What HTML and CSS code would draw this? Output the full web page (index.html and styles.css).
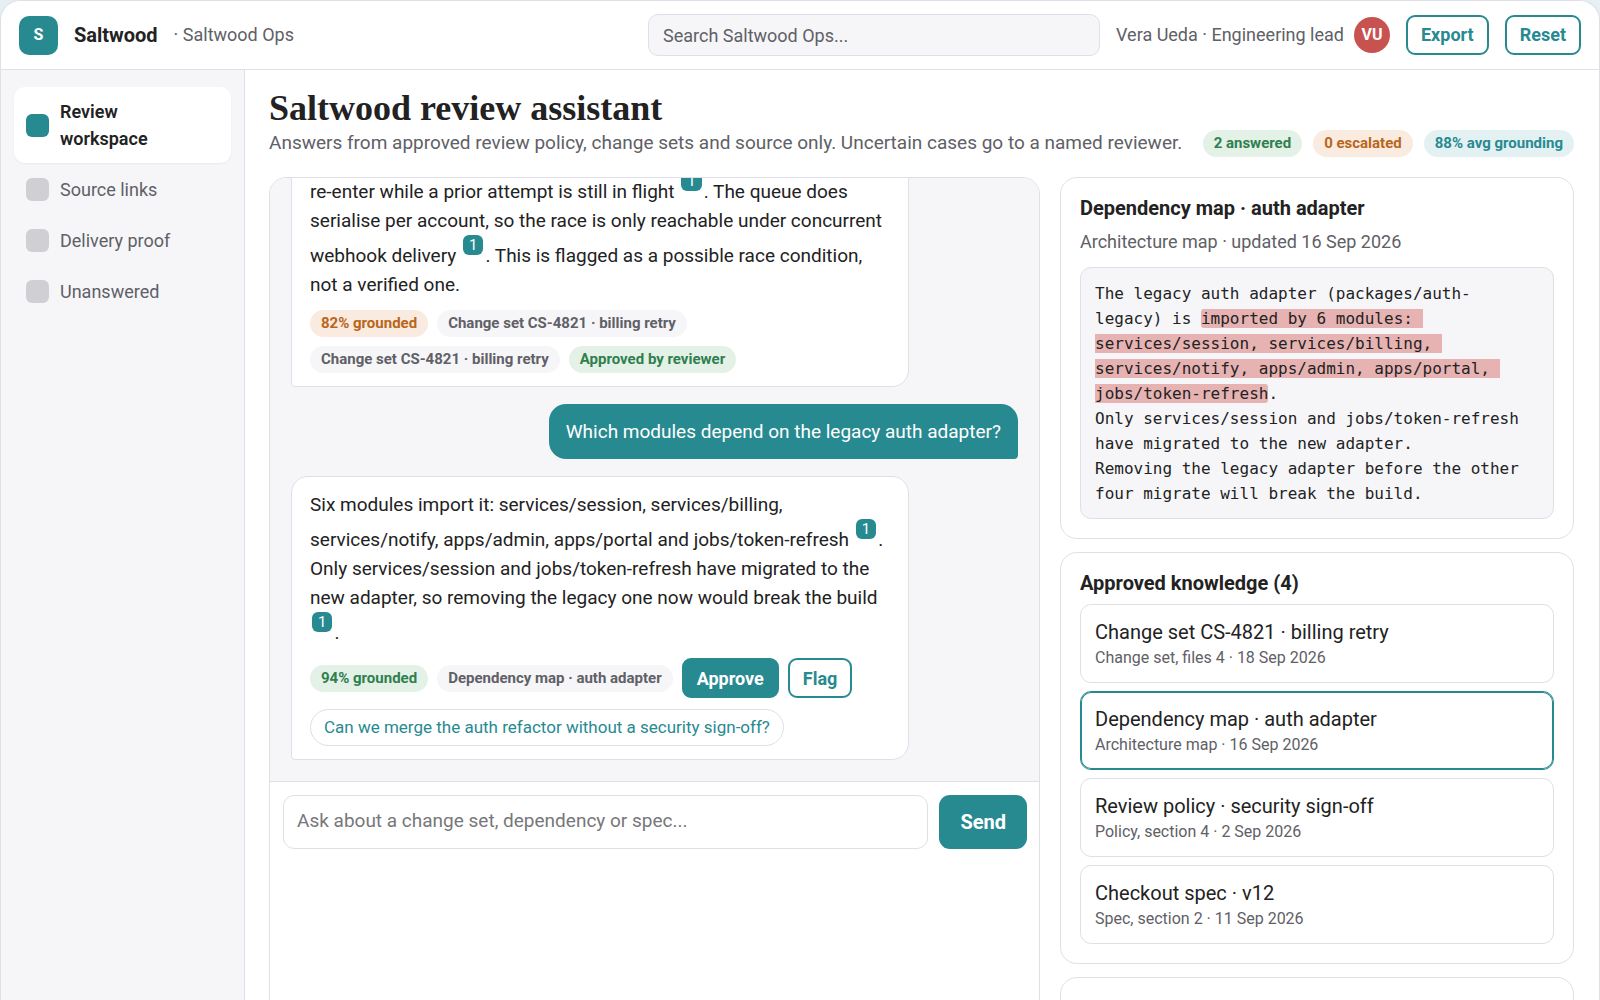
FILE: index.html
```html
<!DOCTYPE html>
<html lang="en">
<head>
<meta charset="UTF-8">
<meta name="viewport" content="width=device-width, initial-scale=1.0">
<title>Saltwood review assistant</title>
<link rel="stylesheet" href="styles.css">
</head>
<body>
  <div class="app">
    <header class="topbar">
      <div class="logo">S</div>
      <strong class="brand">Saltwood</strong>
      <span class="workspace">· Saltwood Ops</span>
      <input class="search" type="search" placeholder="Search Saltwood Ops..." aria-label="Search Saltwood Ops">
      <div class="user">
        <span>Vera Ueda · Engineering lead</span>
        <span class="avatar">VU</span>
      </div>
      <button class="btn" type="button">Export</button>
      <button class="btn" type="button">Reset</button>
    </header>

    <div class="body">
      <nav class="sidebar">
        <a href="#" class="active"><i></i><span>Review<br>workspace</span></a>
        <a href="#"><i></i><span>Source links</span></a>
        <a href="#"><i></i><span>Delivery proof</span></a>
        <a href="#"><i></i><span>Unanswered</span></a>
      </nav>

      <main class="main">
        <div class="page-head">
          <div>
            <h1>Saltwood review assistant</h1>
            <p>Answers from approved review policy, change sets and source only. Uncertain cases go to a named reviewer.</p>
          </div>
          <div class="stats">
            <span class="chip green">2 answered</span>
            <span class="chip orange">0 escalated</span>
            <span class="chip teal">88% avg grounding</span>
          </div>
        </div>

        <div class="columns">
          <section class="chat">
            <div class="messages">
              <div class="bubble bot">
                <p>re-enter while a prior attempt is still in flight <sup>1</sup>. The queue does<br>serialise per account, so the race is only reachable under concurrent webhook delivery <sup>1</sup>. This is flagged as a possible race condition, not a verified one.</p>
                <div class="meta">
                  <span class="chip orange">82% grounded</span>
                  <span class="chip">Change set CS-4821 · billing retry</span>
                  <span class="chip">Change set CS-4821 · billing retry</span>
                  <span class="chip green">Approved by reviewer</span>
                </div>
              </div>

              <div class="bubble me">Which modules depend on the legacy auth adapter?</div>

              <div class="bubble bot">
                <p>Six modules import it: services/session, services/billing, services/notify, apps/admin, apps/portal and jobs/token-refresh <sup>1</sup>. Only services/session and jobs/token-refresh have migrated to the new adapter, so removing the legacy one now would break the build <sup>1</sup>.</p>
                <div class="meta">
                  <span class="chip green">94% grounded</span>
                  <span class="chip">Dependency map · auth adapter</span>
                  <button class="btn primary" type="button">Approve</button>
                  <button class="btn" type="button">Flag</button>
                  <button class="suggest" type="button">Can we merge the auth refactor without a security sign-off?</button>
                </div>
              </div>
            </div>

            <form class="composer">
              <textarea rows="1" placeholder="Ask about a change set, dependency or spec..." aria-label="Your question"></textarea>
              <button class="send" type="submit">Send</button>
            </form>
          </section>

          <aside class="side">
            <section class="card">
              <h2>Dependency map · auth adapter</h2>
              <p class="card-sub">Architecture map · updated 16 Sep 2026</p>
              <pre class="source">The legacy auth adapter (packages/auth-legacy) is <mark>imported by 6 modules: services/session, services/billing, services/notify, apps/admin, apps/portal, jobs/token-refresh</mark>.
Only services/session and jobs/token-refresh have migrated to the new adapter.
Removing the legacy adapter before the other four migrate will break the build.</pre>
            </section>

            <section class="card">
              <h2>Approved knowledge (4)</h2>
              <div class="docs">
                <button class="doc" type="button">Change set CS-4821 · billing retry<small>Change set, files 4 · 18 Sep 2026</small></button>
                <button class="doc selected" type="button">Dependency map · auth adapter<small>Architecture map · 16 Sep 2026</small></button>
                <button class="doc" type="button">Review policy · security sign-off<small>Policy, section 4 · 2 Sep 2026</small></button>
                <button class="doc" type="button">Checkout spec · v12<small>Spec, section 2 · 11 Sep 2026</small></button>
              </div>
            </section>

            <section class="card">
              <h2>Escalations</h2>
            </section>
          </aside>
        </div>
      </main>
    </div>
  </div>
</body>
</html>
```
FILE: styles.css
```css
:root {
  --teal: #278a91;
  --ink: #222223;
  --muted: #606066;
  --line: #e0dfe8;
  --soft: #f6f6f9;
}

* {
  box-sizing: border-box;
}

body {
  margin: 0;
  background: #e4f0f2;
  color: var(--ink);
  font-family: Roboto, "Liberation Sans", sans-serif;
  font-size: 19px;
  line-height: 28px;
}

h1, h2, p, pre {
  margin: 0;
}

button, input, textarea {
  font: inherit;
}

button {
  cursor: pointer;
}

.app {
  display: flex;
  flex-direction: column;
  height: 100vh;
  overflow: hidden;
  background: #fff;
  border: 1px solid var(--line);
  border-bottom: 0;
  border-radius: 20px 20px 0 0;
}

/* top bar */
.topbar {
  display: flex;
  align-items: center;
  gap: 16px;
  flex: none;
  padding: 13px 18px;
  border-bottom: 1px solid var(--line);
}

.logo {
  display: grid;
  place-items: center;
  width: 39px;
  height: 39px;
  border-radius: 10px;
  background: var(--teal);
  color: #fff;
  font-size: 16px;
  font-weight: 700;
}

.brand {
  font-size: 20px;
  font-weight: 700;
}

.workspace {
  color: var(--muted);
  font-size: 18px;
}

.search {
  width: 452px;
  height: 42px;
  margin-left: auto;
  padding: 0 14px;
  border: 1px solid var(--line);
  border-radius: 10px;
  background: var(--soft);
  font-size: 18px;
}

.search::placeholder {
  color: var(--muted);
}

.user {
  display: flex;
  align-items: center;
  gap: 10px;
  color: var(--muted);
  font-size: 18px;
}

.avatar {
  display: grid;
  place-items: center;
  width: 36px;
  height: 36px;
  border-radius: 50%;
  background: #c85250;
  color: #fff;
  font-size: 16px;
  font-weight: 700;
}

.btn {
  height: 40px;
  padding: 0 13px;
  border: 2px solid var(--teal);
  border-radius: 9px;
  background: #fff;
  color: var(--teal);
  font-size: 18px;
  font-weight: 700;
}

.btn.primary {
  background: var(--teal);
  color: #fff;
}

.body {
  display: flex;
  flex: 1;
  min-height: 0;
}

/* sidebar */
.sidebar {
  display: flex;
  flex-direction: column;
  gap: 2px;
  flex: none;
  width: 244px;
  padding: 17px 13px;
  border-right: 1px solid var(--line);
  background: var(--soft);
}

.sidebar a {
  display: flex;
  align-items: center;
  gap: 11px;
  padding: 11px 12px;
  border-radius: 11px;
  color: var(--muted);
  font-size: 18px;
  line-height: 27px;
  text-decoration: none;
}

.sidebar i {
  flex: none;
  width: 23px;
  height: 23px;
  border-radius: 6px;
  background: #d0cfd4;
}

.sidebar .active {
  background: #fff;
  box-shadow: 0 1px 2px rgba(0, 0, 0, 0.05);
  color: var(--ink);
  font-weight: 600;
}

.sidebar .active i {
  background: var(--teal);
}

/* main */
.main {
  flex: 1;
  min-width: 0;
  overflow: hidden;
  padding: 17px 25px 17px 24px;
}

.page-head {
  display: flex;
  align-items: flex-end;
  justify-content: space-between;
  gap: 16px;
  margin-bottom: 20px;
}

.page-head h1 {
  font-family: "Liberation Serif", serif;
  font-size: 36px;
  font-weight: 700;
  line-height: 42px;
}

.page-head p {
  color: var(--muted);
}

.stats {
  display: flex;
  flex: none;
  gap: 11px;
}

.chip {
  padding: 0 11px;
  border-radius: 14px;
  background: var(--soft);
  color: var(--muted);
  font-size: 15px;
  font-weight: 700;
  line-height: 27px;
  white-space: nowrap;
}

.chip.green {
  background: #e3f1e7;
  color: #2f7f4f;
}

.chip.orange {
  background: #f9ebdf;
  color: #b9651b;
}

.chip.teal {
  background: #e4f1f3;
  color: var(--teal);
}

.columns {
  display: grid;
  grid-template-columns: 3fr 2fr;
  gap: 20px;
}

/* chat */
.chat {
  overflow: hidden;
  border: 1px solid var(--line);
  border-radius: 17px;
}

.messages {
  display: flex;
  flex-direction: column;
  justify-content: flex-end;
  gap: 17px;
  height: calc(100vh - 397px);
  overflow: hidden;
  padding: 21px;
  background: var(--soft);
}

.bubble {
  flex: none;
  max-width: 85%;
  padding: 13px 17px;
  border-radius: 17px;
  line-height: 29px;
}

.bubble.bot {
  align-self: flex-start;
  padding: 13px 18px;
  border: 1px solid var(--line);
  border-bottom-left-radius: 4px;
  background: #fff;
}

.bubble.me {
  align-self: flex-end;
  border-bottom-right-radius: 4px;
  background: var(--teal);
  color: #fff;
}

.bubble sup {
  display: inline-block;
  margin: 0 2px;
  padding: 0 6px;
  border-radius: 6px;
  background: var(--teal);
  color: #fff;
  font-size: 15px;
  line-height: 20px;
  vertical-align: 12px;
}

.meta {
  display: flex;
  flex-wrap: wrap;
  align-items: center;
  gap: 9px;
  margin-top: 11px;
}

.suggest {
  height: 37px;
  margin-top: 2px;
  padding: 0 13px;
  border: 1px solid var(--line);
  border-radius: 19px;
  background: #fff;
  color: var(--teal);
  font-size: 17px;
}

.composer {
  display: flex;
  gap: 11px;
  padding: 13px 12px 13px 13px;
  border-top: 1px solid var(--line);
}

.composer textarea {
  flex: 1;
  height: 54px;
  padding: 11px 13px;
  border: 1px solid var(--line);
  border-radius: 11px;
  resize: none;
}

.composer textarea::placeholder {
  color: #77777a;
}

.send {
  padding: 0 21px;
  border: 0;
  border-radius: 11px;
  background: var(--teal);
  color: #fff;
  font-size: 20px;
  font-weight: 700;
}

/* right column */
.side {
  display: flex;
  flex-direction: column;
  gap: 13px;
}

.card {
  padding: 16px 19px 19px;
  border: 1px solid var(--line);
  border-radius: 17px;
}

.card h2 {
  font-size: 20px;
  font-weight: 700;
}

.card-sub {
  margin: 6px 0 11px;
  color: var(--muted);
  font-size: 18px;
}

.source {
  padding: 13px 20px 12px 14px;
  border: 1px solid var(--line);
  border-radius: 11px;
  background: var(--soft);
  font-family: "DejaVu Sans Mono", monospace;
  font-size: 16px;
  line-height: 25px;
  white-space: pre-wrap;
}

.source mark {
  border-radius: 3px;
  background: #e6b3b2;
  color: inherit;
}

.docs {
  display: flex;
  flex-direction: column;
  gap: 8px;
  margin-top: 7px;
}

.doc {
  padding: 13px 14px;
  border: 1px solid var(--line);
  border-radius: 11px;
  background: #fff;
  color: var(--ink);
  font-size: 20px;
  text-align: left;
}

.doc.selected {
  border-color: var(--teal);
  box-shadow: inset 0 0 0 1px var(--teal);
}

.doc small {
  display: block;
  color: var(--muted);
  font-size: 16px;
  line-height: 23px;
}
```
